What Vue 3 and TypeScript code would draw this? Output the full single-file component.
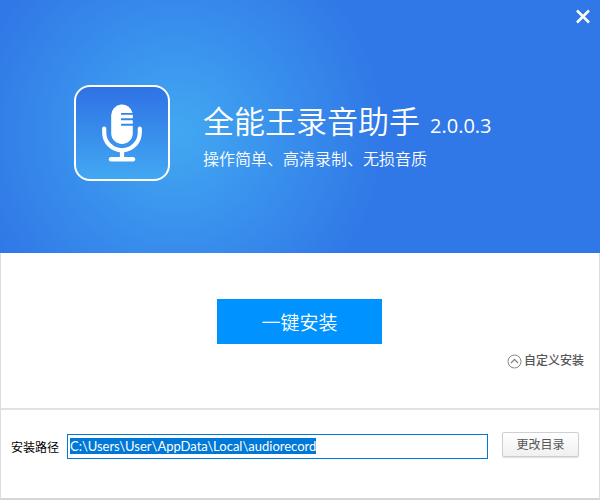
<script setup lang="ts">
import { onMounted, ref } from 'vue'

const version = '2.0.0.3'
const installPath = ref('C:\\Users\\User\\AppData\\Local\\audiorecord')
const pathInput = ref<HTMLInputElement | null>(null)
const showCustom = ref(true)

onMounted(() => {
  pathInput.value?.focus()
  pathInput.value?.select()
})
</script>

<template>
  <main class="installer">
    <header class="hero">
      <button class="close" type="button" aria-label="关闭">
        <svg width="16" height="16" viewBox="0 0 16 16" aria-hidden="true">
          <path d="M2 1.500 L14 13.500 M14 1.500 L2 13.500" stroke="#fff" stroke-width="2.5" fill="none" />
        </svg>
      </button>
      <div class="logo">
        <svg width="92" height="92" viewBox="0 0 92 92" aria-hidden="true">
          <path
            fill="#fff"
            d="M35.200 28 a10.800 10.800 0 0 1 21.350 -2 H45 V27.700 H56.800 V31.200 H45 V33.200 H56.800 V36.800 H45 V38.800 H56.800 V46.200 a10.800 10.800 0 0 1 -21.600 0 Z"
          />
          <path
            d="M28.200 41.700 V45.500 a17.800 17.800 0 0 0 35.600 0 V41.700"
            fill="none"
            stroke="#fff"
            stroke-width="4.200"
            stroke-linecap="round"
          />
          <path d="M46 63 V72" stroke="#fff" stroke-width="4.200" />
          <path d="M35 72.200 H57" stroke="#fff" stroke-width="4.400" stroke-linecap="round" />
        </svg>
      </div>
      <div class="titles">
        <h1>全能王录音助手<span class="version">{{ version }}</span></h1>
        <p>操作简单、高清录制、无损音质</p>
      </div>
    </header>

    <section class="actions">
      <button class="install" type="button">一键安装</button>
      <button class="custom" type="button" :aria-expanded="showCustom" @click="showCustom = !showCustom">
        <svg width="15" height="15" viewBox="0 0 15 15" aria-hidden="true">
          <circle cx="7.500" cy="7.500" r="6.500" fill="none" stroke="#888" />
          <path d="M4 9 L7.500 5.500 L11 9" fill="none" stroke="#888" stroke-width="1.300" />
        </svg>
        <span>自定义安装</span>
      </button>
    </section>

    <section v-if="showCustom" class="location">
      <label for="install-path">安装路径</label>
      <input id="install-path" ref="pathInput" v-model="installPath" type="text" spellcheck="false" />
      <button class="browse" type="button">更改目录</button>
    </section>
  </main>
</template>

<style>
body {
  margin: 0;
  background: #fff;
}
</style>

<style scoped>
.installer {
  box-sizing: border-box;
  min-height: 100vh;
  display: flex;
  flex-direction: column;
  background: #fff;
  color: #000;
  font-family: "Open Sans", "Noto Sans CJK SC", sans-serif;
  font-size: 12px;
}

button,
input {
  font-family: inherit;
  margin: 0;
}

button {
  cursor: pointer;
}

.hero {
  position: relative;
  display: flex;
  align-items: center;
  box-sizing: border-box;
  min-height: 253px;
  padding: 12px 40px 0 74px;
  gap: 33px;
  background: radial-gradient(circle 208px at 177px 133px, #42a8f2, #3078e7);
  color: #fff;
}

.close {
  position: absolute;
  top: 9px;
  right: 9px;
  padding: 0;
  border: 0;
  background: none;
}

.close svg,
.logo svg,
.custom svg {
  display: block;
}

.logo {
  flex: none;
  border: 2px solid #fff;
  border-radius: 16px;
  background: linear-gradient(#2f72e5, #42a8f2);
}

.titles {
  padding-top: 6px;
}

h1 {
  margin: 0;
  font-size: 31px;
  line-height: 42px;
  font-weight: 350;
}

.version {
  margin-left: 10px;
  font-size: 20px;
  font-weight: 400;
}

.titles p {
  margin: 0;
  font-size: 16px;
  line-height: 24px;
  font-weight: 350;
}

.actions {
  flex: 1 0 auto;
  display: flex;
  flex-direction: column;
  align-items: center;
  box-sizing: border-box;
  padding: 46px 15px 36px 14px;
  border: solid #ddd;
  border-width: 0 1px;
}

.install {
  width: 165px;
  height: 45px;
  padding: 0;
  border: 0;
  background: #0092ff;
  color: #fff;
  font-size: 19px;
  font-weight: 350;
}

.custom {
  align-self: flex-end;
  display: flex;
  align-items: center;
  gap: 2px;
  margin-top: 8px;
  padding: 0;
  border: 0;
  background: none;
  color: #555;
  font-size: 12px;
  line-height: 18px;
  font-weight: 500;
}

.location {
  display: flex;
  align-items: flex-start;
  box-sizing: border-box;
  min-height: 92px;
  padding: 22px 20px 38px 10px;
  border: 1px solid #ddd;
  border-top: 2px solid #e2e2e2;
  border-bottom: 2px solid #d5d5d5;
}

.location label {
  margin-top: 6px;
  line-height: 20px;
}

.location input {
  flex: 1;
  min-width: 0;
  height: 25px;
  box-sizing: border-box;
  margin: 2px 14px 0 8px;
  padding: 0 2px 2px;
  border: 1px solid #0078d7;
  border-radius: 0;
  outline: 0;
  background: #fff;
  color: #000;
  font-family: Lato, "Noto Sans CJK SC", sans-serif;
  font-size: 13px;
}

.location input::selection {
  background: #0078d7;
  color: #fff;
}

.browse {
  width: 77px;
  height: 25px;
  padding: 0 0 2px;
  border: 1px solid #ccd0d4;
  border-radius: 2px;
  background: linear-gradient(#fff, #f0f0f0);
  box-shadow: 0 1px 1px #ddd;
  color: #555;
  font-size: 12px;
}
</style>
